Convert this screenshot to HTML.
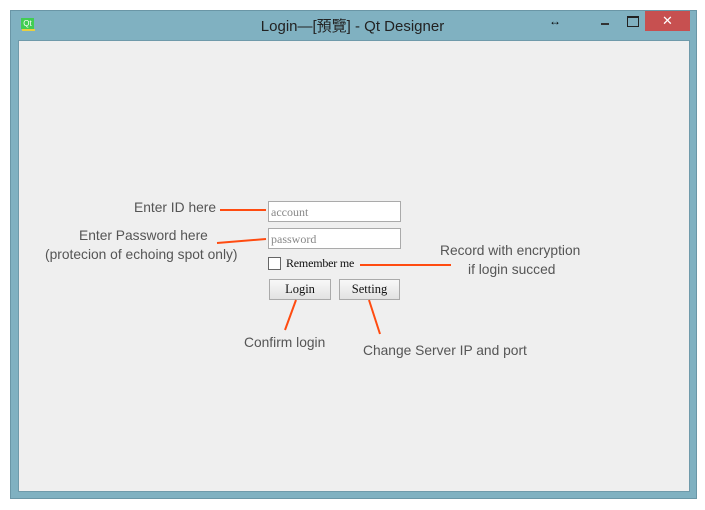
<!DOCTYPE html>
<html><head><meta charset="utf-8"><style>
body{margin:0;width:705px;height:510px;background:#fff;position:relative;overflow:hidden;font-family:"Liberation Sans","Noto Sans CJK TC",sans-serif}
.win{position:absolute;left:10px;top:10px;width:687px;height:489px;background:#80b1c1;border:1px solid #6a96a6;box-sizing:border-box}
.client{position:absolute;left:18px;top:40px;width:672px;height:452px;background:#efefef;border:1px solid #6f9aaa;box-sizing:border-box}
.title{position:absolute;left:0;width:705px;top:15px;text-align:center;font-size:15px;color:#222}
.close{position:absolute;left:645px;top:11px;width:45px;height:20px;background:#c75050;color:#fff;text-align:center;font-size:13px;line-height:20px}
.lbl{position:absolute;font-size:13.8px;color:#555}
.in{position:absolute;left:268px;width:133px;height:21px;background:#fff;border:1px solid #aaa;box-sizing:border-box;font-family:"Liberation Serif",serif;font-size:12px;color:#888;padding:3px 2px}
.btn{position:absolute;top:279px;height:21px;border:1px solid #aaa;box-sizing:border-box;background:linear-gradient(#f8f8f8,#e2e2e2);font-family:"Liberation Serif",serif;font-size:12.5px;text-align:center;line-height:19px;color:#111}
</style></head><body>
<div class="win"></div>
<div class="client"></div>
<div style="position:absolute;left:21px;top:18px;width:13px;height:11px;background:#41cd52;color:#fff;font-size:8px;line-height:11px;text-align:center">Qt</div>
<div style="position:absolute;left:22px;top:29px;width:13px;height:2px;background:#e8d040"></div>
<div class="title">Login—[預覽] - Qt Designer</div>
<div style="position:absolute;left:549px;top:14px;font-size:12px">↔</div>
<div style="position:absolute;left:601px;top:23px;width:8px;height:2px;background:#333"></div>
<div style="position:absolute;left:627px;top:16px;width:10px;height:8px;border:1px solid #222;border-top-width:2px"></div>
<div class="close">✕</div>
<div class="lbl" style="left:134px;top:200px">Enter ID here</div>
<div class="lbl" style="left:79px;top:228px">Enter Password here</div>
<div class="lbl" style="left:45px;top:247px">(protecion of echoing spot only)</div>
<div class="lbl" style="left:440px;top:243px">Record with encryption</div>
<div class="lbl" style="left:468px;top:262px">if login succed</div>
<div class="lbl" style="left:244px;top:335px">Confirm login</div>
<div class="lbl" style="left:363px;top:343px">Change Server IP and port</div>
<div class="in" style="top:201px">account</div>
<div class="in" style="top:228px">password</div>
<div style="position:absolute;left:268px;top:257px;width:13px;height:13px;border:1px solid #666;box-sizing:border-box;background:#fff"></div>
<div style="position:absolute;left:286px;top:256px;font-family:'Liberation Serif',serif;font-size:12px;color:#111;letter-spacing:-0.2px">Remember me</div>
<div class="btn" style="left:269px;width:62px">Login</div>
<div class="btn" style="left:339px;width:61px">Setting</div>
<svg width="705" height="510" style="position:absolute;left:0;top:0" stroke="#ff4b10" stroke-width="2">
<line x1="220" y1="210" x2="266" y2="210"/>
<line x1="217" y1="243" x2="266" y2="239"/>
<line x1="360" y1="265" x2="451" y2="265"/>
<line x1="296" y1="300" x2="285" y2="330"/>
<line x1="369" y1="300" x2="380" y2="334"/>
</svg>
</body></html>
